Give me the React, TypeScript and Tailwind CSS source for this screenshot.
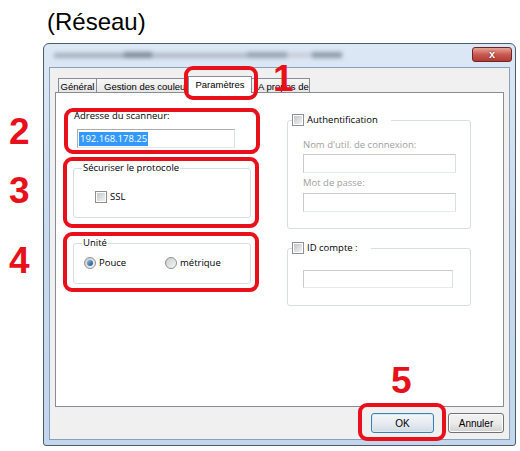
import React from "react";

const ui = "font-['Open_Sans',sans-serif] text-[9.5px] leading-[12px]";

const CheckBox = () => (
    <span className="block w-[12px] h-[12px] border border-[#8e8f8f] bg-white p-px shrink-0">
        <span className="block w-full h-full bg-linear-to-br from-[#c4c6c8] to-[#f3f3f3]" />
    </span>
);

const Radio = ({ on = false }: { on?: boolean }) => (
    <span className="flex items-center justify-center w-[12px] h-[12px] rounded-full border border-[#8e8f8f] bg-linear-to-br from-[#c9cbcd] to-[#f8f8f8] shrink-0">
        {on && <span className="w-[6px] h-[6px] rounded-full bg-linear-to-br from-[#8cc0ea] to-[#1c4f85]" />}
    </span>
);

const TextBox = ({ className = "", children }: { className?: string; children?: React.ReactNode }) => (
    <div className={`bg-white border border-[#abadb3] border-r-[#dbdfe6] border-b-[#e3e9ef] flex items-center ${className}`}>
        {children}
    </div>
);

const Tab = ({ label, className = "" }: { label: string; className?: string }) => (
    <div
        className={`h-[14px] border border-b-0 border-[#898c95] bg-linear-to-b from-[#f7f7f7] to-[#e6e6e6] overflow-hidden whitespace-nowrap leading-[12px] pt-[2px] ${className}`}
    >
        {label}
    </div>
);

const Marker = ({ className }: { className: string }) => (
    <div className={`absolute border-4 border-[#e8101a] rounded-[9px] ${className}`} />
);

const Num = ({ n, className }: { n: string; className: string }) => (
    <div className={`absolute text-[37px] leading-none font-bold text-[#e8101a] ${className}`}>{n}</div>
);

const App = () => {
    return (
        <div className="relative w-[520px] h-[451px] bg-white overflow-hidden font-['Liberation_Sans',Arial,sans-serif] text-black">
            <div className="pl-[47px] pt-[10px] text-[24px] leading-[24px]">(Réseau)</div>

            {/* window */}
            <div className="ml-[43px] mt-[9px] w-[473px] h-[403px] flex flex-col border border-[#4c5c74] rounded-t-[6px] rounded-b-[3px] bg-linear-to-b from-[#dde8f5] via-[#c9daed] to-[#c3d6eb]">
                {/* title bar (blurred in the original) */}
                <div className="h-[23px] flex items-start shrink-0">
                    <div className="ml-[10px] mt-[8px] flex items-center blur-[2px]">
                        <span className="w-[70px] h-[5px] bg-[#a4aebb]" />
                        <span className="w-[28px] h-[6px] bg-[#7f8a9a]" />
                        <span className="w-[95px] h-[5px] bg-[#b0b9c5]" />
                        <span className="w-[40px] h-[6px] bg-[#98a2b0]" />
                        <span className="w-[25px] h-[4px] bg-[#c0c8d2]" />
                        <span className="w-[30px] h-[6px] bg-[#8f9aa9]" />
                    </div>
                    <div className="ml-auto mr-[3px] mt-[3px] w-[40px] h-[15px] border border-[#6d2626] rounded-[3px] bg-linear-to-b from-[#e4a597] via-[#c95a52] to-[#b23a34] flex items-center justify-center text-white text-[11px] font-bold leading-none [text-shadow:0_0_2px_#5a1010]">
                        x
                    </div>
                </div>

                {/* client area */}
                <div className="mx-[5px] mb-[5px] flex-1 border border-[#8aa0ba] bg-[#f0f0f0] flex flex-col">
                    {/* tabs */}
                    <div className="pt-[8px] pl-[8px] h-[24px] flex items-end text-[9.5px]">
                        <Tab label="Général" className="w-[39px] text-center" />
                        <Tab label="Gestion des couleurs" className="w-[95px] -ml-px pl-[7px]" />
                        <div className="relative z-10 -ml-[3px] -mb-px h-[17px] w-[64px] border border-b-0 border-[#898c95] bg-white text-center leading-[12px] pt-[2px]">
                            Paramètres
                        </div>
                        <Tab label="A propos de" className="w-[60px] -ml-[2px] pl-[7px]" />
                    </div>

                    {/* tab panel */}
                    <div className={`mx-[5px] h-[315px] shrink-0 border border-[#898c95] bg-white flex ${ui}`}>
                        {/* left column */}
                        <div className="ml-[17px] w-[178px] flex flex-col">
                            <div className="mt-[17px] pl-px">Adresse du scanneur:</div>
                            <TextBox className="ml-[4px] mt-[7px] w-[158px] h-[19px] pl-px">
                                <span className="bg-[#3399ff] text-white leading-[14px] px-px">192.168.178.25</span>
                            </TextBox>

                            <fieldset className="mt-[14px] h-[56px] border border-[#d5dfe5] rounded-[3px] px-[8px]">
                                <legend className="px-px">Sécuriser le protocole</legend>
                                <div className="ml-[13px] mt-[17px] flex items-center gap-[3px]">
                                    <CheckBox />
                                    <span>SSL</span>
                                </div>
                            </fieldset>

                            <fieldset className="mt-[19px] h-[47px] border border-[#d5dfe5] rounded-[3px] px-[8px]">
                                <legend className="px-px">Unité</legend>
                                <div className="ml-[2px] mt-[8px] flex items-center">
                                    <div className="w-[81px] flex items-center gap-[3px]">
                                        <Radio on />
                                        <span>Pouce</span>
                                    </div>
                                    <div className="flex items-center gap-[3px]">
                                        <Radio />
                                        <span>métrique</span>
                                    </div>
                                </div>
                            </fieldset>
                        </div>

                        {/* right column */}
                        <div className="ml-[36px] w-[184px] flex flex-col">
                            <fieldset className="mt-[21px] h-[115px] border border-[#d5dfe5] rounded-[3px] px-[4px]">
                                <legend className="flex items-center gap-[3px] pr-[13px]">
                                    <CheckBox />
                                    <span>Authentification</span>
                                </legend>
                                <div className="pl-[11px] flex flex-col text-[#a0a0a0]">
                                    <div className="mt-[13px]">Nom d'util. de connexion:</div>
                                    <TextBox className="mt-[3px] w-[153px] h-[19px] border-[#c9cbce]" />
                                    <div className="mt-[4px]">Mot de passe:</div>
                                    <TextBox className="mt-[4px] w-[153px] h-[19px] border-[#c9cbce]" />
                                </div>
                            </fieldset>

                            <fieldset className="mt-[13px] h-[64px] border border-[#d5dfe5] rounded-[3px] px-[4px]">
                                <legend className="flex items-center gap-[3px] pr-[13px]">
                                    <CheckBox />
                                    <span>ID compte :</span>
                                </legend>
                                <div className="pl-[11px]">
                                    <TextBox className="mt-[16px] w-[150px] h-[18px] border-[#c9cbce]" />
                                </div>
                            </fieldset>
                        </div>
                    </div>

                    {/* buttons */}
                    <div className="flex justify-end gap-[14px] pr-[5px] pt-[6px] text-[10px]">
                        <div className="w-[63px] h-[20px] border border-[#3c7fb1] rounded-[3px] bg-linear-to-b from-[#f4f7fa] via-[#e6ecf1] to-[#d3dbe2] shadow-[inset_0_0_0_1px_#d4ecfa] flex items-center justify-center">
                            OK
                        </div>
                        <div className="w-[56px] h-[20px] border border-[#707070] rounded-[3px] bg-linear-to-b from-[#f2f2f2] via-[#ebebeb] to-[#d0d0d0] shadow-[inset_0_0_0_1px_#fcfcfc] flex items-center justify-center">
                            Annuler
                        </div>
                    </div>
                </div>
            </div>

            {/* annotations */}
            <Marker className="left-[184px] top-[66px] w-[74px] h-[34px]" />
            <Marker className="left-[64px] top-[108px] w-[196px] h-[46px]" />
            <Marker className="left-[63px] top-[157px] w-[196px] h-[71px]" />
            <Marker className="left-[63px] top-[232px] w-[196px] h-[60px]" />
            <Marker className="left-[358px] top-[403px] w-[88px] h-[38px]" />

            <Num n="1" className="left-[273px] top-[60px]" />
            <Num n="2" className="left-[9px] top-[113px]" />
            <Num n="3" className="left-[9px] top-[172px]" />
            <Num n="4" className="left-[9px] top-[242px]" />
            <Num n="5" className="left-[391px] top-[362px]" />
        </div>
    );
};

export default App;
